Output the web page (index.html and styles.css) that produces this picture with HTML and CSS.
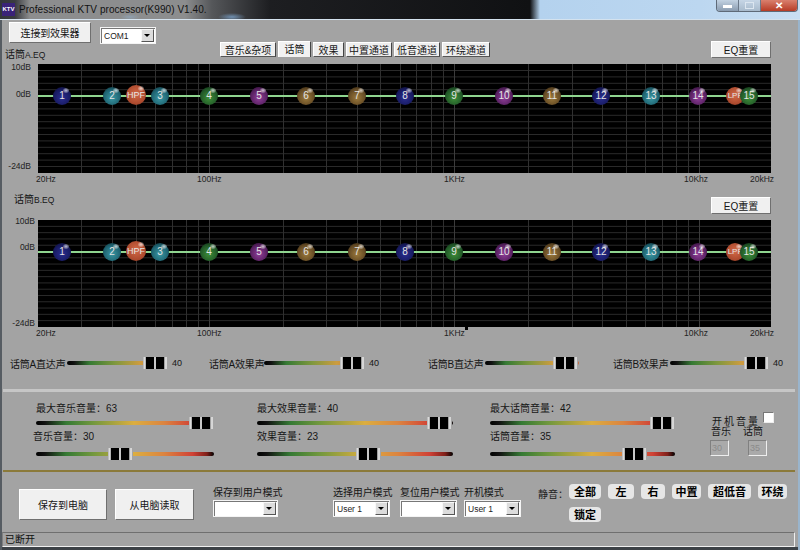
FILE: index.html

```html
<!DOCTYPE html>
<html lang="en">
<head>
    <meta charset="UTF-8">
    <title>Professional KTV processor(K990) V1.40.</title>
    <link rel="stylesheet" href="styles.css">
</head>
<body>
    <svg class="defs" width="0" height="0">
        <symbol id="eq-grid" viewBox="0 0 733 109" preserveAspectRatio="none">
            <path class="grid-h" d="M0 6.5H733M0 12.9H733M0 19.3H733M0 25.7H733M0 38.5H733M0 44.9H733M0 51.3H733M0 57.7H733M0 64.1H733M0 70.5H733M0 76.9H733M0 83.3H733M0 89.7H733M0 96.1H733M0 102.5H733"/>
            <path class="grid-v" d="M43.5 0V109M74.5 0V109M98.5 0V109M117.5 0V109M134.5 0V109M148.5 0V109M160.5 0V109M245.5 0V109M288.5 0V109M319.5 0V109M342.5 0V109M362.5 0V109M378.5 0V109M393.5 0V109M405.5 0V109M490.5 0V109M534.5 0V109M564.5 0V109M588.5 0V109M607.5 0V109M624.5 0V109M638.5 0V109M650.5 0V109"/>
            <path class="grid-d" d="M171.5 0V109M416.5 0V109M661.5 0V109"/>
        </symbol>
    </svg>

    <div class="titlebar">
        <span class="app-icon">KTV</span>
        <span class="app-title">Professional KTV processor(K990) V1.40.</span>
        <div class="win-controls">
            <span class="win-btn win-min"><i></i></span>
            <span class="win-btn win-max"><i></i></span>
            <span class="win-btn win-close">✕</span>
        </div>
    </div>

    <div class="window">
        <div class="connect-row">
            <button class="btn btn-connect">连接到效果器</button>
            <div class="combo combo-com"><span>COM1</span><b></b></div>
        </div>

        <div class="eq-head">
            <div class="eq-title">话筒<small>A.EQ</small></div>
            <div class="tabs">
                <span class="tab tab-music">音乐&amp;杂项</span>
                <span class="tab tab-active">话筒</span>
                <span class="tab tab-fx">效果</span>
                <span class="tab">中置通道</span>
                <span class="tab">低音通道</span>
                <span class="tab tab-last">环绕通道</span>
            </div>
            <button class="btn btn-reset">EQ重置</button>
        </div>

        <div class="plot">
            <svg class="plot-grid"><use href="#eq-grid"/></svg>
            <span class="db" style="top:-3px">10dB</span>
            <span class="db" style="top:24px">0dB</span>
            <span class="db" style="top:96px">-24dB</span>
            <div class="zero-line" style="top:31px"></div>
            <span class="knob navy" style="left:15px;top:23px">1</span>
            <span class="knob teal" style="left:65px;top:23px">2</span>
            <span class="knob filter" style="left:88px;top:21px">HPF</span>
            <span class="knob teal" style="left:113px;top:23px">3</span>
            <span class="knob green" style="left:162px;top:23px">4</span>
            <span class="knob purple" style="left:212px;top:23px">5</span>
            <span class="knob brown" style="left:259px;top:23px">6</span>
            <span class="knob brown" style="left:310px;top:23px">7</span>
            <span class="knob navy" style="left:358px;top:23px">8</span>
            <span class="knob green" style="left:407px;top:23px">9</span>
            <span class="knob purple" style="left:457px;top:23px">10</span>
            <span class="knob brown" style="left:505px;top:23px">11</span>
            <span class="knob navy" style="left:554px;top:23px">12</span>
            <span class="knob teal" style="left:604px;top:23px">13</span>
            <span class="knob purple" style="left:651px;top:23px">14</span>
            <span class="knob filter filter-low" style="left:688px;top:23px">LPF</span>
            <span class="knob green" style="left:702px;top:23px">15</span>
        </div>
        <div class="x-axis">
            <span style="left:33px">20Hz</span>
            <span style="left:194px">100Hz</span>
            <span style="left:441px">1KHz</span>
            <span style="left:681px">10Khz</span>
            <span style="left:747px">20kHz</span>
        </div>

        <div class="eq-head eq-head-b">
            <div class="eq-title">话筒<small>B.EQ</small></div>
            <button class="btn btn-reset">EQ重置</button>
        </div>

        <div class="plot plot-b">
            <svg class="plot-grid"><use href="#eq-grid"/></svg>
            <span class="db" style="top:-5px">10dB</span>
            <span class="db" style="top:21px">0dB</span>
            <span class="db" style="top:97px">-24dB</span>
            <div class="zero-line" style="top:31px"></div>
            <span class="knob navy" style="left:15px;top:23px">1</span>
            <span class="knob teal" style="left:65px;top:23px">2</span>
            <span class="knob filter" style="left:88px;top:21px">HPF</span>
            <span class="knob teal" style="left:113px;top:23px">3</span>
            <span class="knob green" style="left:162px;top:23px">4</span>
            <span class="knob purple" style="left:212px;top:23px">5</span>
            <span class="knob brown" style="left:259px;top:23px">6</span>
            <span class="knob brown" style="left:310px;top:23px">7</span>
            <span class="knob navy" style="left:358px;top:23px">8</span>
            <span class="knob green" style="left:407px;top:23px">9</span>
            <span class="knob purple" style="left:457px;top:23px">10</span>
            <span class="knob brown" style="left:505px;top:23px">11</span>
            <span class="knob navy" style="left:554px;top:23px">12</span>
            <span class="knob teal" style="left:604px;top:23px">13</span>
            <span class="knob purple" style="left:651px;top:23px">14</span>
            <span class="knob filter filter-low" style="left:688px;top:23px">LPF</span>
            <span class="knob green" style="left:702px;top:23px">15</span>
            <i class="marker" style="left:427px"></i>
        </div>
        <div class="x-axis x-axis-b">
            <span style="left:33px">20Hz</span>
            <span style="left:194px">100Hz</span>
            <span style="left:441px">1KHz</span>
            <span style="left:681px">10Khz</span>
            <span style="left:747px">20kHz</span>
        </div>

        <div class="mix-row">
            <div class="mix mix-1">
                <span class="mix-label">话筒A直达声</span>
                <div class="slider slider-mix" style="width:101px"><div class="thumb" style="left:76px"></div></div>
                <span class="mix-val">40</span>
            </div>
            <div class="mix mix-2">
                <span class="mix-label">话筒A效果声</span>
                <div class="slider slider-mix" style="width:101px"><div class="thumb" style="left:76px"></div></div>
                <span class="mix-val">40</span>
            </div>
            <div class="mix mix-3">
                <span class="mix-label">话筒B直达声</span>
                <div class="slider slider-mix" style="width:94px"><div class="thumb" style="left:68px"></div></div>
            </div>
            <div class="mix mix-4">
                <span class="mix-label">话筒B效果声</span>
                <div class="slider slider-mix" style="width:99px"><div class="thumb" style="left:74px"></div></div>
                <span class="mix-val">40</span>
            </div>
        </div>

        <div class="divider"></div>

        <div class="levels">
            <div class="level-col col-music">
                <div class="level-label">最大音乐音量：63</div>
                <div class="slider"><div class="thumb" style="left:153px"></div></div>
                <div class="level-label level-sub">音乐音量：30</div>
                <div class="slider"><div class="thumb" style="left:72px"></div></div>
            </div>
            <div class="level-col col-fx">
                <div class="level-label">最大效果音量：40</div>
                <div class="slider"><div class="thumb" style="left:170px"></div></div>
                <div class="level-label level-sub2">效果音量：23</div>
                <div class="slider"><div class="thumb" style="left:99px"></div></div>
            </div>
            <div class="level-col col-mic">
                <div class="level-label">最大话筒音量：42</div>
                <div class="slider"><div class="thumb" style="left:160px"></div></div>
                <div class="level-label level-sub2">话筒音量：35</div>
                <div class="slider"><div class="thumb" style="left:132px"></div></div>
            </div>
            <div class="boot-vol">
                <div class="boot-head"><span>开机音量</span><i class="check"></i></div>
                <div class="boot-names"><span>音乐</span><span>话筒</span></div>
                <div class="boot-inputs"><span class="num-box">30</span><span class="num-box">35</span></div>
            </div>
        </div>

        <div class="gold-line"></div>

        <div class="bottom">
            <button class="btn btn-save">保存到电脑</button>
            <button class="btn btn-load">从电脑读取</button>
            <div class="mode mode-save">
                <label>保存到用户模式</label>
                <div class="combo"><span></span><b></b></div>
            </div>
            <div class="mode mode-select">
                <label>选择用户模式</label>
                <div class="combo"><span>User 1</span><b></b></div>
            </div>
            <div class="mode mode-reset">
                <label>复位用户模式</label>
                <div class="combo"><span></span><b></b></div>
            </div>
            <div class="mode mode-boot">
                <label>开机模式</label>
                <div class="combo"><span>User 1</span><b></b></div>
            </div>
            <div class="mute">
                <span class="mute-title">静音：</span>
                <div class="mute-grid">
                    <span class="pill pill-all">全部</span>
                    <span class="pill pill-left">左</span>
                    <span class="pill pill-right">右</span>
                    <span class="pill pill-center">中置</span>
                    <span class="pill pill-sub">超低音</span>
                    <span class="pill pill-sur">环绕</span>
                    <span class="pill pill-lock">锁定</span>
                </div>
            </div>
        </div>

        <div class="statusbar">已断开</div>
    </div>
</body>
</html>
```

FILE: styles.css

```css
* { box-sizing: border-box; }
html, body { margin: 0; width: 800px; height: 550px; overflow: hidden; }
body { font-family: "Liberation Sans", "Noto Sans CJK SC", sans-serif; font-size: 10px; color: #161616; background: #a3a3a3; }
.defs { position: absolute; }

/* title bar */
.titlebar { height: 19px; display: flex; align-items: center; position: relative; background: radial-gradient(14px 4px at 232px 17px, #6f8fb0, rgba(111,143,176,0)), radial-gradient(10px 3px at 130px 17px, #8fa0b0, rgba(143,160,176,0)), linear-gradient(90deg, #33363a 0, #3a3c40 15px, #8c8d8e 30px, #8c8d8e 185px, #55575a 212px, #1d1e21 270px, #101113 530px, #b4d2ee 540px, #bcd7f0 700px, #c9def2 100%); }
.app-icon { width: 13px; height: 13px; margin: 0 4px 0 2px; background: #3a2378; color: #fff; font-size: 6px; font-weight: bold; line-height: 13px; text-align: center; }
.app-title { font-size: 10px; letter-spacing: 0.05px; color: #111; white-space: nowrap; }
.win-controls { position: absolute; top: 0; right: 2px; width: 82px; height: 12px; display: flex; border: 1px solid #5e6a78; border-top: 0; border-radius: 0 0 4px 4px; overflow: hidden; }
.win-btn { display: flex; align-items: center; justify-content: center; height: 100%; }
.win-btn i { display: block; }
.win-min { width: 22px; background: linear-gradient(#c2d2e2, #8a9cb0); border-right: 1px solid #6a7888; }
.win-min i { width: 9px; height: 3px; background: #fff; margin-top: 2px; }
.win-max { width: 22px; background: linear-gradient(#c6d6e6, #a8bacc); border-right: 1px solid #6a7888; }
.win-max i { width: 9px; height: 7px; border: 1px solid #dce6f0; }
.win-close { flex: 1; background: linear-gradient(#d9806e, #b73c26); color: #fff; font-size: 10px; font-weight: bold; }

/* window */
.window { height: 531px; padding: 0 5px 0 3px; background: #a3a3a3; border-top: 1px solid #d4e2ee; box-shadow: inset 2px 0 0 #565c62, inset -2px 0 0 #99b4cc, inset 0 -3px 0 #3c4146; }
.btn { padding: 0; font: inherit; color: #161616; background: #f0f0f0; border: 1px solid; border-color: #fff #6f6f6f #6f6f6f #fff; border-radius: 0; }
.connect-row { height: 22px; padding: 2px 0 0 6px; display: flex; align-items: flex-start; }
.btn-connect { width: 82px; height: 21px; font-size: 10px; letter-spacing: -0.2px; }
.combo-com { margin: 5px 0 0 9px; width: 56px; }
.combo { height: 17px; display: flex; align-items: center; justify-content: space-between; padding: 1px; background: #fff; border: 1px solid #f4f4f4; box-shadow: inset 1px 1px 0 #777; }
.combo span { font-size: 8.5px; padding-left: 2px; color: #222; }
.combo b { width: 13px; height: 13px; background: #dcdcdc; border: 1px solid; border-color: #f8f8f8 #555 #555 #f8f8f8; position: relative; }
.combo b::after { content: ""; position: absolute; left: 2px; top: 4px; border: 3px solid transparent; border-top: 3px solid #000; border-bottom: 0; }

/* eq */
.eq-head { height: 22px; display: grid; grid-template-columns: 217px 491px 60px; }
.eq-title { align-self: end; margin: 0 0 2px 2px; font-size: 10px; line-height: 13px; white-space: nowrap; }
.eq-title small { font-size: 8.5px; }
.tabs { display: flex; align-items: flex-start; }
.tab { height: 15px; width: 46px; margin-right: 2px; font-size: 10px; line-height: 15px; text-align: center; white-space: nowrap; background: #eee; border: 1px solid; border-color: #fff #444 #555 #fff; }
.tab-music { width: 56px; }
.tab-active { width: 33px; height: 16px; margin-top: -1px; border-bottom: 0; background: #f2f2f2; }
.tab-fx { width: 31px; }
.tab-last { width: 48px; }
.btn-reset { width: 60px; height: 17px; margin-top: -1px; font-size: 10px; }
.eq-head-b { height: 35px; grid-template-columns: 708px 60px; }
.eq-head-b .eq-title { margin: 0 0 13px 11px; }
.eq-head-b .btn-reset { margin-top: 12px; }
.plot { position: relative; margin-left: 35px; width: 733px; height: 109px; background: #000; }
.plot-b { height: 107px; }
.plot-grid { position: absolute; left: 0; top: 0; width: 100%; height: 100%; }
.grid-h { stroke: #2a2a2a; stroke-width: 1; fill: none; }
.grid-v { stroke: #303030; stroke-width: 1; fill: none; }
.grid-d { stroke: #3c3c3c; stroke-width: 1; fill: none; }
.db { position: absolute; right: 100%; margin-right: 7px; font-size: 8.5px; line-height: 12px; color: #222; white-space: nowrap; }
.plot-b .db { margin-right: 3px; }
.zero-line { position: absolute; left: 0; right: 0; height: 2px; background: #8fd58f; z-index: 2; }
.knob { position: absolute; z-index: 3; width: 18px; height: 18px; border-radius: 50%; color: #e4e4e4; font-size: 10px; line-height: 18px; text-align: center; white-space: nowrap; }
.knob::after { content: ""; position: absolute; right: 2px; top: 1px; width: 6px; height: 5px; border-radius: 50%; background: radial-gradient(rgba(255,255,255,.7), rgba(255,255,255,0)); }
.navy { background: radial-gradient(circle at 50% 60%, #2a2e90 0, #171a60 60%, #08081e 100%); }
.teal { background: radial-gradient(circle at 50% 60%, #3a98a4 0, #1e6270 60%, #0a2228 100%); }
.green { background: radial-gradient(circle at 50% 60%, #3e9038 0, #215828 60%, #0a2010 100%); }
.purple { background: radial-gradient(circle at 50% 60%, #903e9a 0, #572060 60%, #1e0a24 100%); }
.brown { background: radial-gradient(circle at 50% 60%, #9c7a3c 0, #644a24 60%, #241a0a 100%); }
.filter { width: 20px; height: 20px; font-size: 9px; line-height: 20px; background: radial-gradient(circle at 50% 45%, #d46a48 0, #ac4a2e 65%, #5c2414 100%); }
.filter-low { width: 18px; height: 18px; line-height: 18px; font-size: 8px; }
.marker { position: absolute; top: 100%; width: 3px; height: 3px; background: #000; }
.x-axis { position: relative; height: 12px; }
.x-axis span { position: absolute; top: 0; font-size: 8.5px; line-height: 12px; color: #222; white-space: nowrap; }
.x-axis-b { height: 10px; }

/* mix row */
.mix-row { height: 52px; padding-top: 20px; display: flex; }
.mix { display: flex; align-items: center; height: 12px; white-space: nowrap; }
.mix-label { width: 53px; font-size: 10px; letter-spacing: -0.2px; }
.mix-val { font-size: 9px; margin-left: 4px; }
.mix-1 { margin-left: 7px; width: 199px; }
.mix-2 { width: 219px; }
.mix-3 { width: 185px; }
.mix-1 .slider { margin-left: 4px; }
.mix-2 .slider { margin-left: 2px; }
.mix-3 .slider { margin-left: 4px; }
.mix-4 .slider { margin-left: 4px; }

/* sliders */
.slider { position: relative; width: 178px; height: 4px; border-radius: 2px; background: linear-gradient(90deg, #000 0, #111 5%, #357a34 17%, #72983e 32%, #dcae40 55%, #dc8440 72%, #d04236 88%, #80201a 96%, #000 100%); }
.slider-mix { background: linear-gradient(90deg, #000 0, #111 7%, #357a34 22%, #80983e 48%, #cc9c40 72%, #cc683a 100%); }
.thumb { position: absolute; top: -4px; width: 25px; height: 12px; background: linear-gradient(90deg, #8a8a8a 0, #f0f0f0 1px, #a0a0a0 3px, #000 3.5px, #000 11px, #c8c8c8 11.5px, #c8c8c8 13px, #000 13.5px, #000 21px, #a0a0a0 21.5px, #f0f0f0 23px, #8a8a8a 25px); }

.divider { height: 3px; background: #c6c6c6; }

/* volume levels */
.levels { height: 78px; display: flex; padding-top: 10px; }
.level-col { width: 178px; flex: none; }
.col-music { margin-left: 33px; }
.col-fx { margin-left: 43px; width: 196px; }
.col-mic { margin-left: 37px; width: 185px; }
.col-fx .slider { width: 196px; }
.col-mic .slider { width: 185px; }
.level-label { height: 13px; font-size: 10px; line-height: 13px; white-space: nowrap; margin-bottom: 6px; }
.level-sub { margin: 5px 0 9px -3px; }
.level-sub2 { margin: 5px 0 9px 0; }
.boot-vol { margin-left: 36px; padding-top: 13px; width: 64px; }
.boot-head { display: flex; height: 11px; align-items: center; margin-left: 1px; }
.boot-head span { letter-spacing: 2px; font-size: 10px; white-space: nowrap; width: 50px; }
.check { display: block; margin: -7px 0 0 1px; width: 11px; height: 11px; background: #fff; border: 1px solid #777; border-right-color: #eee; border-bottom-color: #eee; }
.boot-names { display: flex; gap: 12px; height: 12px; line-height: 11px; }
.boot-inputs { display: flex; gap: 19px; margin-top: 2px; margin-left: -1px; }
.num-box { width: 19px; height: 16px; font-size: 9px; line-height: 14px; color: #8a8a8a; padding-left: 1px; background: #aaa; border: 1px solid; border-color: #808080 #eee #eee #808080; }

.gold-line { height: 2px; background: #8b7a3a; }

/* bottom controls */
.bottom { height: 60px; display: flex; align-items: flex-start; }
.btn-save { width: 88px; height: 31px; margin: 17px 0 0 16px; }
.btn-load { width: 79px; height: 31px; margin: 17px 0 0 8px; }
.mode { display: flex; flex-direction: column; margin-top: 14px; white-space: nowrap; }
.mode label { height: 14px; line-height: 13px; font-size: 10px; letter-spacing: -0.1px; }
.mode-save { margin-left: 19px; width: 65px; }
.mode-select { margin-left: 55px; width: 57px; }
.mode-reset { margin-left: 10px; width: 57px; }
.mode-boot { margin-left: 7px; width: 57px; }
.mute { display: flex; margin: 12px 0 0 17px; }
.mute-title { margin-top: 2px; width: 31px; color: #222; white-space: nowrap; }
.mute-grid { display: flex; flex-wrap: wrap; align-items: flex-start; gap: 8px 7px; width: 225px; }
.pill { height: 15px; font-size: 11px; font-weight: bold; line-height: 15px; text-align: center; color: #000; background: #e6e6e6; border-radius: 4px; font-family: "Noto Sans CJK SC", sans-serif; }
.pill-all { width: 32px; }
.pill-left { width: 26px; }
.pill-right { width: 24px; }
.pill-center { width: 29px; }
.pill-sub { width: 43px; }
.pill-sur { width: 29px; }
.pill-lock { width: 32px; }

.statusbar { height: 15px; margin-left: -1px; padding-left: 2px; font-size: 10px; line-height: 13px; border: 1px solid; border-color: #6f6f6f #f0f0f0 #f0f0f0 #7f7f7f; color: #111; }
```
